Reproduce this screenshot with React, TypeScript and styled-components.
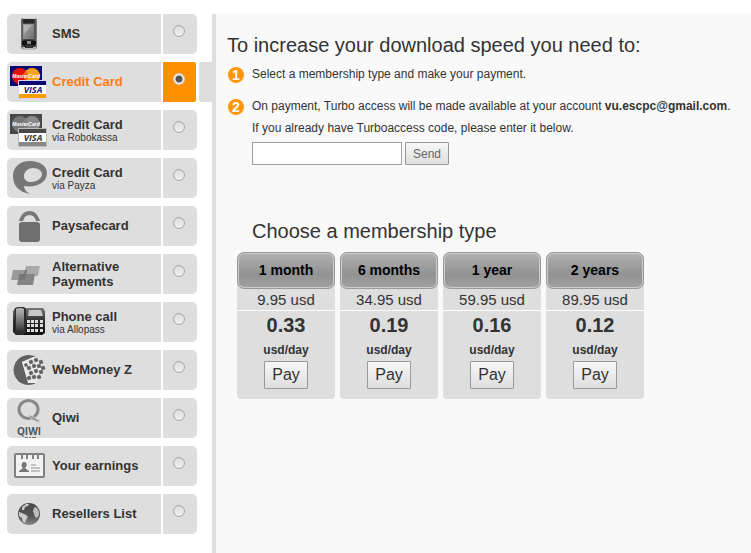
import React, { useState } from "react";
import styled, { createGlobalStyle } from "styled-components";

const GlobalStyle = createGlobalStyle`
  * { box-sizing: border-box; }
  body {
    margin: 0;
    background: #fff;
    color: #333;
    font-family: "Liberation Sans", Arial, sans-serif;
    font-size: 12px;
  }
`;

const Page = styled.div`
  display: flex;
  min-height: 100vh;
  padding: 14px 0 0 7px;
`;

const Methods = styled.form`
  display: flex;
  flex-direction: column;
  flex: none;
  gap: 8px;
  width: 205px;
`;

const Method = styled.label`
  display: flex;
  height: 40px;
  cursor: pointer;
`;

const MethodLabel = styled.span`
  display: flex;
  align-items: center;
  flex: none;
  width: 154px;
  background: #dedede;
  border-radius: 5px 0 0 5px;
  overflow: hidden;
`;

const MethodIcon = styled.svg`
  flex: none;
  width: 45px;
  height: 40px;
`;

const MethodText = styled.span<{ $active: boolean }>`
  display: flex;
  flex-direction: column;
  padding-bottom: 1px;
  color: ${(p) => (p.$active ? "#ff7d12" : "#333")};
  font-size: 13px;
  font-weight: bold;
  line-height: 15px;
`;

const Via = styled.small`
  font-size: 10px;
  font-weight: normal;
  line-height: 11px;
`;

const RadioCell = styled.span<{ $active: boolean }>`
  flex: none;
  width: ${(p) => (p.$active ? 33 : 34)}px;
  margin-left: 2px;
  padding: 11px 0 0 10px;
  background: ${(p) => (p.$active ? "#ff9000" : "#dedede")};
  border-radius: ${(p) => (p.$active ? "0 2px 2px 0" : "0 5px 5px 0")};
`;

const Radio = styled.input`
  display: block;
  appearance: none;
  width: 12px;
  height: 12px;
  margin: 0;
  border: 1px solid #a6a6a6;
  border-radius: 50%;
  background: linear-gradient(#dcdcdc, #f0f0f0);
  &:checked {
    border-color: #d0d0d0;
    background: radial-gradient(circle, #555 0 3px, #eee 4px);
  }
`;

const Connector = styled.span`
  flex: 1;
  margin-left: 3px;
  background: #dedede;
  border-radius: 3px 0 0 3px;
`;

const Panel = styled.main`
  flex: 1;
  min-width: 0;
  padding: 19px 8px 16px 11px;
  background: #f9f9f9;
  border-left: 4px solid #dedede;
`;

const Title = styled.h1`
  margin: 0;
  font-size: 20px;
  font-weight: normal;
  line-height: 24px;
`;

const Steps = styled.ol`
  display: flex;
  flex-direction: column;
  gap: 10px;
  margin: 6px 0 0;
  padding: 0;
  list-style: none;
`;

const Step = styled.li`
  display: flex;
  gap: 8px;
  line-height: 22px;
`;

const StepBadge = styled.svg`
  flex: none;
  width: 17px;
  height: 17px;
  margin-top: 4px;
`;

const StepText = styled.div`
  white-space: nowrap;
`;

const CodeForm = styled.form`
  display: flex;
  gap: 3px;
  margin-top: 3px;
`;

const CodeInput = styled.input`
  width: 150px;
  height: 23px;
  padding: 2px;
  border: 1px solid #a0a0a0;
  background: #fff;
  font: inherit;
`;

const Button = styled.button<{ $large?: boolean }>`
  height: ${(p) => (p.$large ? 28 : 23)}px;
  padding: 0 7px;
  border: 1px solid #999;
  border-radius: 1px;
  background: linear-gradient(#f8f8f8, #dedede);
  color: ${(p) => (p.$large ? "#333" : "#666")};
  font-family: inherit;
  font-size: ${(p) => (p.$large ? 16 : 12)}px;
  cursor: pointer;
`;

const PlansTitle = styled.h2`
  margin: 54px 0 0 25px;
  font-size: 20px;
  font-weight: normal;
  line-height: 24px;
`;

const Plans = styled.div`
  display: flex;
  gap: 5px;
  margin: 9px 0 0 10px;
`;

const Plan = styled.section`
  width: 98px;
  padding-bottom: 10px;
  background: #dedede;
  border-radius: 7px 7px 4px 4px;
  text-align: center;
`;

const PlanName = styled.h3`
  margin: 0;
  border: 1px solid #999;
  border-radius: 7px;
  background: linear-gradient(#b2b2b2, #929292 60%, #a0a0a0);
  box-shadow: inset 0 0 0 1px #ccc;
  color: #000;
  font-size: 14px;
  line-height: 35px;
`;

const Price = styled.p`
  margin: 0;
  border-bottom: 1px solid #fff;
  font-size: 15px;
  line-height: 21px;
`;

const Rate = styled.p`
  margin: 0;
  padding-top: 2px;
  font-size: 20px;
  font-weight: bold;
  line-height: 24px;
`;

const Unit = styled.p`
  margin: 0;
  padding-top: 2px;
  font-size: 12px;
  font-weight: bold;
  line-height: 22px;
`;

function SmsArt() {
  return (
    <>
      <defs>
        <linearGradient id="smsBody" x2="1">
          <stop stopColor="#777" /><stop offset=".2" stopColor="#222" />
          <stop offset=".8" stopColor="#2a2a2a" /><stop offset="1" stopColor="#888" />
        </linearGradient>
        <linearGradient id="smsScreen" x2="1" y2="1">
          <stop stopColor="#aaa" /><stop offset="1" stopColor="#6c6c6c" />
        </linearGradient>
      </defs>
      <rect x="14" y="4" width="16" height="31" rx="2" fill="url(#smsBody)" />
      <path d="M16 4h12l1 1H15z" fill="#ccc" />
      <rect x="16" y="10" width="11" height="15" fill="url(#smsScreen)" stroke="#888" strokeWidth=".6" />
      <path d="M17 11h8L17 20z" fill="#ccc" opacity=".5" />
      <path d="M15 27h5v4h-5zM24 27h5v4h-5z" fill="#111" />
      <rect x="20" y="27" width="4" height="3" fill="#888" />
      <path d="M15 33h14l-1 3H16z" fill="#bbb" />
      <path d="M18 31h8v3h-8z" fill="#333" />
    </>
  );
}

function CardArt({ gray }: { gray?: boolean }) {
  const navy = gray ? "#484848" : "#0a0a72";
  return (
    <>
      <rect x="3" y="4" width="32" height="20" fill={navy} />
      <circle cx="13" cy="14" r="8" fill={gray ? "#777" : "#e3110c"} />
      <circle cx="25" cy="14" r="8" fill={gray ? "#8a8a8a" : "#f7a11b"} />
      <path d="M19 9a8 8 0 0 1 0 10a8 8 0 0 1 0-10z" fill={gray ? "#808080" : "#ee6215"} />
      <text x="19" y="16" textAnchor="middle" fill="#fff" fontSize="5" fontStyle="italic" fontWeight="bold">MasterCard</text>
      <rect x="11" y="18" width="29" height="19" fill={gray ? "#bbb" : "#d8d2ea"} />
      <rect x="12" y="19" width="27" height="4" fill={navy} />
      <rect x="12" y="23" width="27" height="9" fill="#fff" />
      <rect x="12" y="32" width="27" height="4" fill={gray ? "#888" : "#fb9d05"} />
      <text x="26" y="31" textAnchor="middle" fill={gray ? "#333" : "#171779"} fontFamily="Open Sans, sans-serif" fontSize="9" fontStyle="italic" fontWeight="bold">VISA</text>
    </>
  );
}

function PayzaArt() {
  return (
    <path
      fill="#777"
      fillRule="evenodd"
      d="M23 3C13 3 6 9 6 18c0 10 6 16 17 18c-4-2-6-5-6-8c13 2 23-4 23-13c0-7-7-12-17-12zM26 10c5 0 9 3 9 6c0 4-5 8-11 8c-4 0-7-2-7-6s4-8 9-8z"
    />
  );
}

function LockArt() {
  return (
    <>
      <path d="M12 15C14 9 17 5 22.500 5S31 9 33 15h-4c-1-4-3-6-6.500-6S17 11 16 15z" fill="#777" />
      <rect x="12" y="16" width="21" height="20" rx="3" fill="#6f6f6f" />
    </>
  );
}

function AlternativeArt() {
  return (
    <>
      <path d="M19 12h14l-2 10H16z" fill="#aaa" />
      <path d="M6 16h14l-2 10H4z" fill="#999" />
      <path d="M12 20h16l-2 11H10z" fill="#858585" />
      <path d="M18 16h2l-1 4h-2zM13 20h6l-1 6h-6z" fill="#777" />
    </>
  );
}

function PhoneArt() {
  return (
    <>
      <defs>
        <linearGradient id="deskPhone" x2="0" y2="1">
          <stop stopColor="#777" /><stop offset=".5" stopColor="#2a2a2a" /><stop offset="1" stopColor="#111" />
        </linearGradient>
        <linearGradient id="handset" x2="0" y2="1">
          <stop stopColor="#bbb" /><stop offset=".6" stopColor="#666" /><stop offset="1" stopColor="#222" />
        </linearGradient>
      </defs>
      <path d="M8 6h28l2 3v22l-3 2H9l-3-3V9z" fill="url(#deskPhone)" />
      <path d="M8 6l3-1h6l2 2v23l-3 3H9l-2-3z" fill="#2c2c2c" />
      <path d="M9 7q4-2 8 0v23q-4 3-8 0z" fill="url(#handset)" />
      <path d="M22 8h12l2 6H21z" fill="#c8c8c8" />
      {[18, 22, 27].map((y) =>
        [20, 24, 28, 33].map((x) => <rect key={`${x}-${y}`} x={x} y={y} width="3" height="3" fill="#ddd" />)
      )}
    </>
  );
}

function WebMoneyArt() {
  const squares = [
    [24, 12], [29, 10], [34, 12],
    [22, 18], [27, 16], [32, 16], [36, 18],
    [24, 23], [29, 21], [34, 22],
    [22, 28], [27, 27], [32, 27],
  ];
  return (
    <>
      <path d="M29 7A15 15 0 1 0 29 33L22 33L15 12L26 8z" fill="#606060" />
      <path d="M15 12L26 7l3 0l6 7l1 10l-7 9l-8 0z" fill="#ececec" />
      {squares.map(([x, y]) => (
        <path key={`${x}-${y}`} d={`M${x - 2} ${y - 1}l3-1l1 3l-3 1z`} fill="#606060" stroke="#606060" strokeWidth=".6" />
      ))}
      <path d="M17 14l3-1l1 3l-3 1z" fill="#606060" />
    </>
  );
}

function QiwiArt() {
  return (
    <>
      <ellipse cx="21.500" cy="11.500" rx="9.500" ry="9" fill="none" stroke="#888" strokeWidth="3" />
      <path d="M21 17q4 0 7 3q3 2 6 2q-1 1-3 1q2 1 3 3q-3-2-6-3q-4-1-7-6z" fill="#999" stroke="#dedede" strokeWidth=".6" />
      <text x="22" y="37" textAnchor="middle" fill="#555" fontFamily="Open Sans, sans-serif" fontSize="10" fontWeight="bold">QIWI</text>
      <path d="M18 39h3v1h-3zM22 39h2v1h-2zM25 39h4v1h-4z" fill="#777" />
    </>
  );
}

function EarningsArt() {
  return (
    <>
      <rect x="8" y="8" width="29" height="23" rx="1" fill="#f2f2f2" stroke="#808080" strokeWidth="2" />
      <path d="M14 8h2v5h-2zM19 8h2v5h-2zM25 8h2v5h-2zM30 8h2v5h-2z" fill="#808080" />
      <path d="M17 16c4 0 3 5 1 6l4 3v1H12v-1l4-3c-2-1-2-6 1-6z" fill="#777" />
      <path d="M24 18h5v2h-5zM24 21h9v2h-9zM24 24h9v2h-9z" fill="#c4c4c4" />
    </>
  );
}

function GlobeArt() {
  return (
    <>
      <defs>
        <linearGradient id="globe" x2="0" y2="1">
          <stop stopColor="#4a4a4a" /><stop offset=".6" stopColor="#555" /><stop offset="1" stopColor="#888" />
        </linearGradient>
      </defs>
      <circle cx="22" cy="20" r="11" fill="url(#globe)" />
      <path d="M15 13l4-3l3 0l-1 2l-3 1l-1 3l-2 0zM12 18l3 1l4 2l2 2l-2 3l-1 3l-2-1l-1-4l-3-2z" fill="#cacaca" />
      <path d="M28 13l2 1l2 4v3l-2 3l-2-1l-1-3l-1-3l1-3z" fill="#bcbcbc" />
    </>
  );
}

const methods = [
  { id: "sms", name: "SMS", art: <SmsArt /> },
  { id: "card", name: "Credit Card", art: <CardArt /> },
  { id: "robokassa", name: "Credit Card", via: "via Robokassa", art: <CardArt gray /> },
  { id: "payza", name: "Credit Card", via: "via Payza", art: <PayzaArt /> },
  { id: "paysafe", name: "Paysafecard", art: <LockArt /> },
  { id: "alternative", name: "Alternative Payments", art: <AlternativeArt /> },
  { id: "phone", name: "Phone call", via: "via Allopass", art: <PhoneArt /> },
  { id: "webmoney", name: "WebMoney Z", art: <WebMoneyArt /> },
  { id: "qiwi", name: "Qiwi", art: <QiwiArt /> },
  { id: "earnings", name: "Your earnings", art: <EarningsArt /> },
  { id: "resellers", name: "Resellers List", art: <GlobeArt /> },
];

const plans = [
  { name: "1 month", price: "9.95 usd", rate: "0.33" },
  { name: "6 months", price: "34.95 usd", rate: "0.19" },
  { name: "1 year", price: "59.95 usd", rate: "0.16" },
  { name: "2 years", price: "89.95 usd", rate: "0.12" },
];

function Badge({ value }: { value: number }) {
  return (
    <StepBadge viewBox="0 0 17 17" aria-hidden="true">
      <circle cx="9" cy="8" r="8" fill="#ff960c" />
      <text x="9" y="13" textAnchor="middle" fill="#fff" fontSize="14" fontWeight="bold">{value}</text>
    </StepBadge>
  );
}

export default function App() {
  const [selected, setSelected] = useState("card");
  return (
    <>
      <GlobalStyle />
      <Page>
        <Methods aria-label="Payment method">
          {methods.map((m) => {
            const active = m.id === selected;
            return (
              <Method key={m.id}>
                <MethodLabel>
                  <MethodIcon viewBox="0 0 45 40" aria-hidden="true">{m.art}</MethodIcon>
                  <MethodText $active={active}>
                    {m.name}
                    {m.via && <Via>{m.via}</Via>}
                  </MethodText>
                </MethodLabel>
                <RadioCell $active={active}>
                  <Radio type="radio" name="method" value={m.id} checked={active} onChange={() => setSelected(m.id)} />
                </RadioCell>
                {active && <Connector />}
              </Method>
            );
          })}
        </Methods>
        <Panel>
          <Title>To increase your download speed you need to:</Title>
          <Steps>
            <Step>
              <Badge value={1} />
              <StepText>Select a membership type and make your payment.</StepText>
            </Step>
            <Step>
              <Badge value={2} />
              <StepText>
                On payment, Turbo access will be made available at your account <b>vu.escpc@gmail.com</b>.
                <br />
                <label htmlFor="code">If you already have Turboaccess code, please enter it below.</label>
                <CodeForm onSubmit={(e) => e.preventDefault()}>
                  <CodeInput id="code" type="text" />
                  <Button type="submit">Send</Button>
                </CodeForm>
              </StepText>
            </Step>
          </Steps>
          <PlansTitle>Choose a membership type</PlansTitle>
          <Plans>
            {plans.map((p) => (
              <Plan key={p.name}>
                <PlanName>{p.name}</PlanName>
                <Price>{p.price}</Price>
                <Rate>{p.rate}</Rate>
                <Unit>usd/day</Unit>
                <Button type="button" $large>Pay</Button>
              </Plan>
            ))}
          </Plans>
        </Panel>
      </Page>
    </>
  );
}
